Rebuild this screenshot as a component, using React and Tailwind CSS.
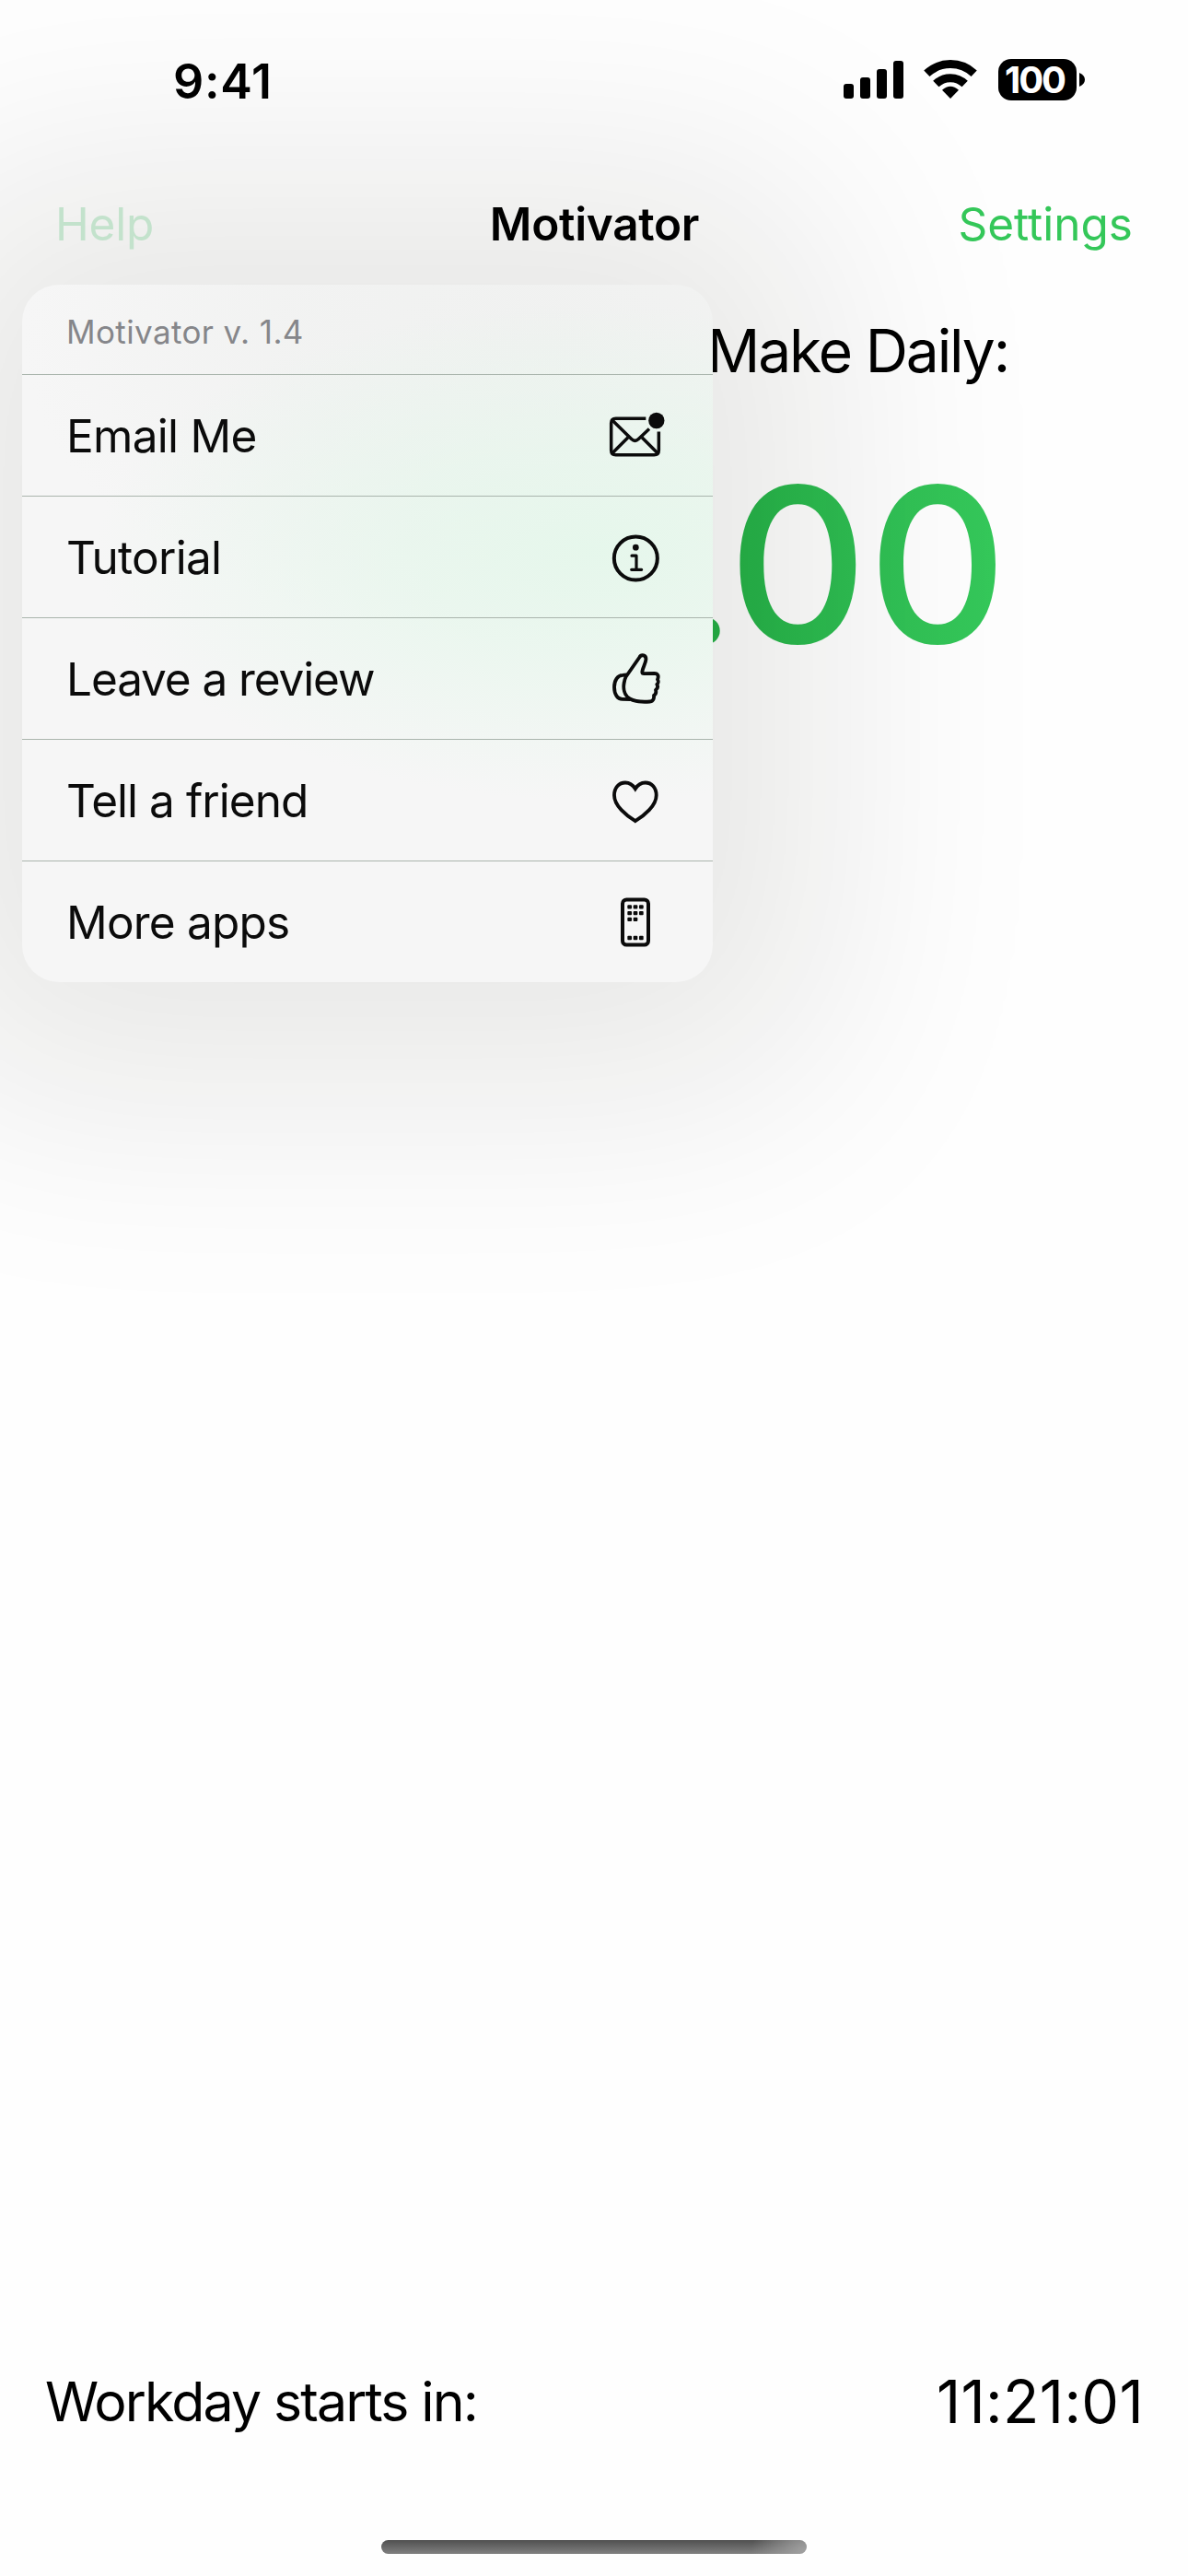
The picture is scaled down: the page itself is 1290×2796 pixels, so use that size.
import React from "react";

function IconSvg({ viewBox, children }) {
  return (
    <svg
      viewBox={viewBox}
      className="h-20 w-20 shrink-0"
      fill="none"
      stroke="#0b0b0b"
      strokeWidth="11.5"
      strokeLinejoin="round"
    >
      {children}
    </svg>
  );
}

function MailIcon() {
  return (
    <IconSvg viewBox="30 37.5 240 240">
      <g strokeWidth="10.5">
        <path d="M184 101H86Q71 101 71 116V205Q71 220 86 220H211Q226 220 226 205V144" />
        <path d="M75 107L137 168Q148.5 179 160 168L195 135" />
        <path d="M75 214L126 163M222 214L171 163" />
      </g>
      <circle cx="218.5" cy="108" r="26" fill="#0b0b0b" stroke="none" />
    </IconSvg>
  );
}

function InfoIcon() {
  return (
    <IconSvg viewBox="30 433.5 240 240">
      <circle cx="151" cy="556.5" r="70.5" strokeWidth="12" />
      <circle cx="151" cy="521" r="10" fill="#0b0b0b" stroke="none" />
      <path d="M138 548H153V593M137 593.5H170" strokeWidth="9.5" strokeLinecap="round" />
    </IconSvg>
  );
}

function ThumbIcon() {
  return (
    <IconSvg viewBox="30 79.5 240 240">
      <path d="M119 192L163 129C169 118 186 121 184 137C183 150 172 166 172 177C172 181 175 182 178 182L211 181C225 181 226 192 222 201C226 207 224 214 220 217C224 224 222 231 216 235C218 243 216 250 210 253C211 262 209 272 197 273C170 275 146 272 132 264C112 252 110 228 113 212C114 203 116 198 119 192Z" />
      <path d="M121 186L108 187C92 187 81 204 81 226C81 250 92 265 107 265L133 266" />
    </IconSvg>
  );
}

function HeartIcon() {
  return (
    <IconSvg viewBox="30 475.5 240 240">
      <path
        strokeLinejoin="miter"
        d="M149.500 662C120 644 81 612 81 578C81 554 96 537 117 537C131 537 142 545 149.500 557C157 545 168 537 182 537C203 537 218 554 218 578C218 612 179 644 149.500 662Z"
      />
    </IconSvg>
  );
}

const APP_DOTS = [
  [0, 0], [1, 0], [2, 0],
  [0, 1], [1, 1], [2, 1],
  [0, 2], [1, 2],
  [0, 5], [1, 5], [2, 5],
];

function PhoneIcon() {
  return (
    <IconSvg viewBox="30 871.5 240 240">
      <rect x="108" y="918" width="84" height="147" rx="13" strokeWidth="12" />
      <g fill="#0b0b0b" stroke="none">
        {APP_DOTS.map(([c, r]) => (
          <rect key={`${c}-${r}`} x={124 + c * 19} y={935 + r * 20.2} width="14" height="13" rx="3" />
        ))}
      </g>
    </IconSvg>
  );
}

const MENU = [
  { label: "Email Me", tracking: "tracking-[-0.7px]", Icon: MailIcon },
  { label: "Tutorial", tracking: "tracking-[-0.74px]", Icon: InfoIcon },
  { label: "Leave a review", tracking: "tracking-[-1.1px]", Icon: ThumbIcon },
  { label: "Tell a friend", tracking: "tracking-[-0.95px]", Icon: HeartIcon },
  { label: "More apps", tracking: "tracking-[-0.8px]", Icon: PhoneIcon },
];

function HelpMenu() {
  return (
    <div className="absolute left-6 top-[309px] w-[750px] rounded-[40px] bg-[#f6f6f6] bg-[radial-gradient(ellipse_540px_270px_at_620px_290px,rgba(229,247,235,0.95)_0%,rgba(229,247,235,0.65)_40%,rgba(229,247,235,0)_100%),radial-gradient(ellipse_560px_330px_at_560px_60px,#f0f1f0_0%,rgba(240,241,240,0.7)_50%,rgba(240,241,240,0)_100%)] shadow-[0_0_290px_122px_rgba(16,16,0,0.095)]">
      <div className="flex h-[97px] items-center pl-12 text-[35px] leading-none tracking-[0.38px] text-[#85868a]">
        <span className="pt-1.5">Motivator v. 1.4</span>
      </div>
      {MENU.map(({ label, tracking, Icon }) => (
        <div
          key={label}
          className="flex h-[132px] items-center justify-between border-t border-[#aab5ad] pl-12 pr-[44px] text-[49.5px] leading-none text-[#0b0b0b]"
        >
          <span className={`pt-0.5 ${tracking}`}>{label}</span>
          <Icon />
        </div>
      ))}
    </div>
  );
}

function StatusBar() {
  return (
    <div className="relative z-10 flex h-44 items-center justify-between pl-[188px] pr-28">
      <span className="pt-0.5 text-[52px] font-semibold leading-none tracking-[0.7px]">9:41</span>
      <div className="-mt-[3px] flex items-center">
        <svg viewBox="48 42 195 135" className="h-[45px] w-[65px]">
          <rect x="48" y="123" width="33" height="48" rx="9" />
          <rect x="102" y="102" width="33" height="69" rx="9" />
          <rect x="156" y="75" width="33" height="96" rx="9" />
          <rect x="210" y="48" width="33" height="123" rx="9" />
        </svg>
        <svg viewBox="310 42 177 135" className="ml-[22px] h-[45px] w-[59px]" fill="none" stroke="#000" strokeWidth="27">
          <path d="M320 89.500A112 112 0 0 1 474 89.500" />
          <path d="M350 123.200A67 67 0 0 1 444 123.200" />
          <path d="M397 171L370 143.500Q397 118.500 424 143.500Z" fill="#000" stroke="none" />
        </svg>
        <div className="ml-[22px] flex h-[45px] w-[85px] items-center justify-center rounded-[14px] bg-black pr-[6px] text-[40px] font-bold leading-none tracking-[-2.1px] text-white">
          100
        </div>
        <svg viewBox="0 0 6 15" className="ml-[3px] h-[15px] w-[6px]">
          <path d="M0 0C4 1.500 6 4.500 6 7.500S4 13.500 0 15Z" />
        </svg>
      </div>
    </div>
  );
}

export default function App() {
  return (
    <div className="relative flex h-[2796px] w-[1290px] flex-col overflow-hidden bg-[#fefefe] font-['Inter',sans-serif] text-black">
      <StatusBar />
      <div className="relative z-10 grid h-[134px] grid-cols-3 items-center px-[60px] pt-0.5 text-[49.5px] leading-none">
        <span className="tracking-[-0.2px] text-[#c3e2cc]">Help</span>
        <span className="pl-px text-center font-semibold tracking-[-0.29px]">Motivator</span>
        <span className="text-right text-[#34c759]">Settings</span>
      </div>
      <div className="flex h-[142px] items-center justify-end pr-[195px] text-[64px] leading-none tracking-[-2.1px]">
        Make Daily:
      </div>
      <div className="flex h-[321px] items-center justify-end pr-[196px] text-[235px] font-medium leading-none">
        <div className="bg-[linear-gradient(to_right,#22ae44_0,#25b348_60px,#2fbf53_200px,#35c85a_340px)] bg-clip-text text-transparent">
          <span className="text-[200px] tracking-[-7px]">.</span>00
        </div>
      </div>
      <div className="grow" />
      <div className="flex h-[100px] items-center justify-between pl-[49px] pr-12 leading-none">
        <span className="-mt-0.5 text-[59px] tracking-[-1.87px]">Workday starts in:</span>
        <span className="text-[64.5px] tracking-[0.37px]">11:21:01</span>
      </div>
      <div className="flex h-[139px] items-end justify-center pb-6">
        <div className="h-[15px] w-[462px] rounded-full bg-[radial-gradient(circle_60px_at_100%_100%,#a2a2a2_0%,rgba(150,150,150,0)_100%),linear-gradient(to_bottom,#505050,#808080)]" />
      </div>
      <HelpMenu />
    </div>
  );
}
